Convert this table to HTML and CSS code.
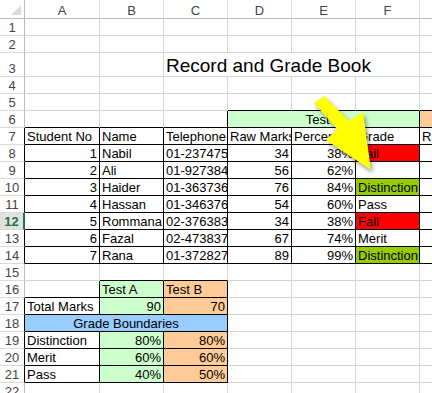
FILE: index.html
```
<!DOCTYPE html>
<html>
<head>
<meta charset="utf-8">
<link rel="stylesheet" href="styles.css">
</head>
<body>
<div class="sheet">
  <div class="c corner"><svg class="tri" width="24" height="18" viewBox="0 0 24 18"><polygon points="11,15 21,15 21,5" fill="#dcdcdc"/></svg></div>
  <div class="c ch">A</div><div class="c ch">B</div><div class="c ch">C</div><div class="c ch">D</div><div class="c ch">E</div><div class="c ch">F</div><div class="c ch">G</div>

  <div class="c rh">1</div><div class="c"></div><div class="c"></div><div class="c"></div><div class="c"></div><div class="c"></div><div class="c"></div><div class="c"></div>
  <div class="c rh">2</div><div class="c"></div><div class="c"></div><div class="c"></div><div class="c"></div><div class="c"></div><div class="c"></div><div class="c"></div>
  <div class="c rh">3</div><div class="c"></div><div class="c"></div><div class="c title s4">Record and Grade Book</div><div class="c"></div>
  <div class="c rh">4</div><div class="c"></div><div class="c"></div><div class="c"></div><div class="c"></div><div class="c"></div><div class="c"></div><div class="c"></div>
  <div class="c rh">5</div><div class="c"></div><div class="c"></div><div class="c"></div><div class="c bb"></div><div class="c bb"></div><div class="c bb"></div><div class="c bb"></div>
  <div class="c rh">6</div><div class="c bb"></div><div class="c bb"></div><div class="c bb br"></div><div class="c s3 m green bb br">Test A</div><div class="c orange bb"></div>

  <div class="c rh rb">7</div><div class="c bb br">Student No</div><div class="c bb br">Name</div><div class="c bb br">Telephone</div><div class="c bb br">Raw Marks</div><div class="c bb br">Percentage</div><div class="c bb br">Grade</div><div class="c bb br">Raw Marks</div>

  <div class="c rh rb">8</div><div class="c bb br r">1</div><div class="c bb br">Nabil</div><div class="c bb br">01-237475</div><div class="c bb br r">34</div><div class="c bb br r">38%</div><div class="c bb br red">Fail</div><div class="c bb br"></div>
  <div class="c rh rb">9</div><div class="c bb br r">2</div><div class="c bb br">Ali</div><div class="c bb br">01-927384</div><div class="c bb br r">56</div><div class="c bb br r">62%</div><div class="c bb br"></div><div class="c bb br"></div>
  <div class="c rh rb">10</div><div class="c bb br r">3</div><div class="c bb br">Haider</div><div class="c bb br">01-363736</div><div class="c bb br r">76</div><div class="c bb br r">84%</div><div class="c bb br dist">Distinction</div><div class="c bb br"></div>
  <div class="c rh rb">11</div><div class="c bb br r">4</div><div class="c bb br">Hassan</div><div class="c bb br">01-346376</div><div class="c bb br r">54</div><div class="c bb br r">60%</div><div class="c bb br">Pass</div><div class="c bb br"></div>
  <div class="c rh sel">12</div><div class="c bb br r">5</div><div class="c bb br">Rommana</div><div class="c bb br">02-376383</div><div class="c bb br r">34</div><div class="c bb br r">38%</div><div class="c bb br red">Fail</div><div class="c bb br"></div>
  <div class="c rh rb">13</div><div class="c bb br r">6</div><div class="c bb br">Fazal</div><div class="c bb br">02-473837</div><div class="c bb br r">67</div><div class="c bb br r">74%</div><div class="c bb br">Merit</div><div class="c bb br"></div>
  <div class="c rh rb">14</div><div class="c bb br r">7</div><div class="c bb br">Rana</div><div class="c bb br">01-372827</div><div class="c bb br r">89</div><div class="c bb br r">99%</div><div class="c bb br dist">Distinction</div><div class="c bb br"></div>

  <div class="c rh">15</div><div class="c"></div><div class="c bb"></div><div class="c bb"></div><div class="c"></div><div class="c"></div><div class="c"></div><div class="c"></div>
  <div class="c rh">16</div><div class="c bb br"></div><div class="c green bb br">Test A</div><div class="c orange bb br">Test B</div><div class="c"></div><div class="c"></div><div class="c"></div><div class="c"></div>
  <div class="c rh rb">17</div><div class="c bb br">Total Marks</div><div class="c green bb br r">90</div><div class="c orange bb br r">70</div><div class="c"></div><div class="c"></div><div class="c"></div><div class="c"></div>
  <div class="c rh rb">18</div><div class="c s3 m blue bb br">Grade Boundaries</div><div class="c"></div><div class="c"></div><div class="c"></div><div class="c"></div>
  <div class="c rh rb">19</div><div class="c bb br">Distinction</div><div class="c green bb br r">80%</div><div class="c orange bb br r">80%</div><div class="c"></div><div class="c"></div><div class="c"></div><div class="c"></div>
  <div class="c rh rb">20</div><div class="c bb br">Merit</div><div class="c green bb br r">60%</div><div class="c orange bb br r">60%</div><div class="c"></div><div class="c"></div><div class="c"></div><div class="c"></div>
  <div class="c rh rb">21</div><div class="c bb br">Pass</div><div class="c green bb br r">40%</div><div class="c orange bb br r">50%</div><div class="c"></div><div class="c"></div><div class="c"></div><div class="c"></div>
  <div class="c rh">22</div><div class="c"></div><div class="c"></div><div class="c"></div><div class="c"></div><div class="c"></div><div class="c"></div><div class="c"></div>
</div>
<svg class="arrow" width="432" height="393" viewBox="0 0 432 393">
  <polygon points="314,103 337,129 326,140 371,170 363,112 349,121 324,96" fill="#ffff00"/>
</svg>
</body>
</html>
```
FILE: styles.css
```
html, body {
  margin: 0;
  padding: 0;
  background: #fff;
}
body {
  width: 432px;
  height: 393px;
  overflow: hidden;
  position: relative;
  font-family: "Liberation Sans", Arial, sans-serif;
  font-size: 13px;
  color: #000;
}
.sheet {
  display: grid;
  grid-template-columns: 25px 75px 64px 64px 64px 64px 64px 64px;
  grid-template-rows: 19px 17px 17px 24px;
  grid-auto-rows: 17px;
  width: 484px;
}
.c {
  box-sizing: border-box;
  border-right: 1px solid #d4d4d4;
  border-bottom: 1px solid #d4d4d4;
  display: flex;
  align-items: flex-end;
  padding: 0 2px;
  line-height: 15px;
  white-space: nowrap;
  overflow: hidden;
  min-width: 0;
}
.corner {
  border-right-color: #bcbcbc;
  border-bottom-color: #bcbcbc;
  padding: 0;
  align-items: flex-start;
}
.tri { display: block; }
.ch {
  justify-content: center;
  color: #444;
  border-right-color: #dadada;
  border-bottom-color: #bcbcbc;
}
.rh {
  justify-content: center;
  color: #444;
  padding: 0;
  border-right-color: #bcbcbc;
  border-bottom-color: #dadada;
}
.rh.rb { border-right-color: #000; }
.rh.sel {
  background: #e1e1e1;
  color: #217346;
  font-weight: bold;
  border-right: 2px solid #217346;
}
.r { justify-content: flex-end; }
.m { justify-content: center; }
.bb { border-bottom-color: #000; }
.br { border-right-color: #000; }
.s3 { grid-column: span 3; }
.s4 { grid-column: span 4; }
.title {
  font-size: 19px;
  line-height: 21px;
  padding-left: 2px;
}
.green { background: #ccffcc; }
.orange { background: #ffcc99; }
.blue { background: #99ccff; }
.red { background: #ff0000; }
.dist { background: #99cc00; }
.arrow {
  position: absolute;
  left: 0;
  top: 0;
  pointer-events: none;
  filter: drop-shadow(2px 3px 2px rgba(0, 0, 0, 0.4));
}
```
